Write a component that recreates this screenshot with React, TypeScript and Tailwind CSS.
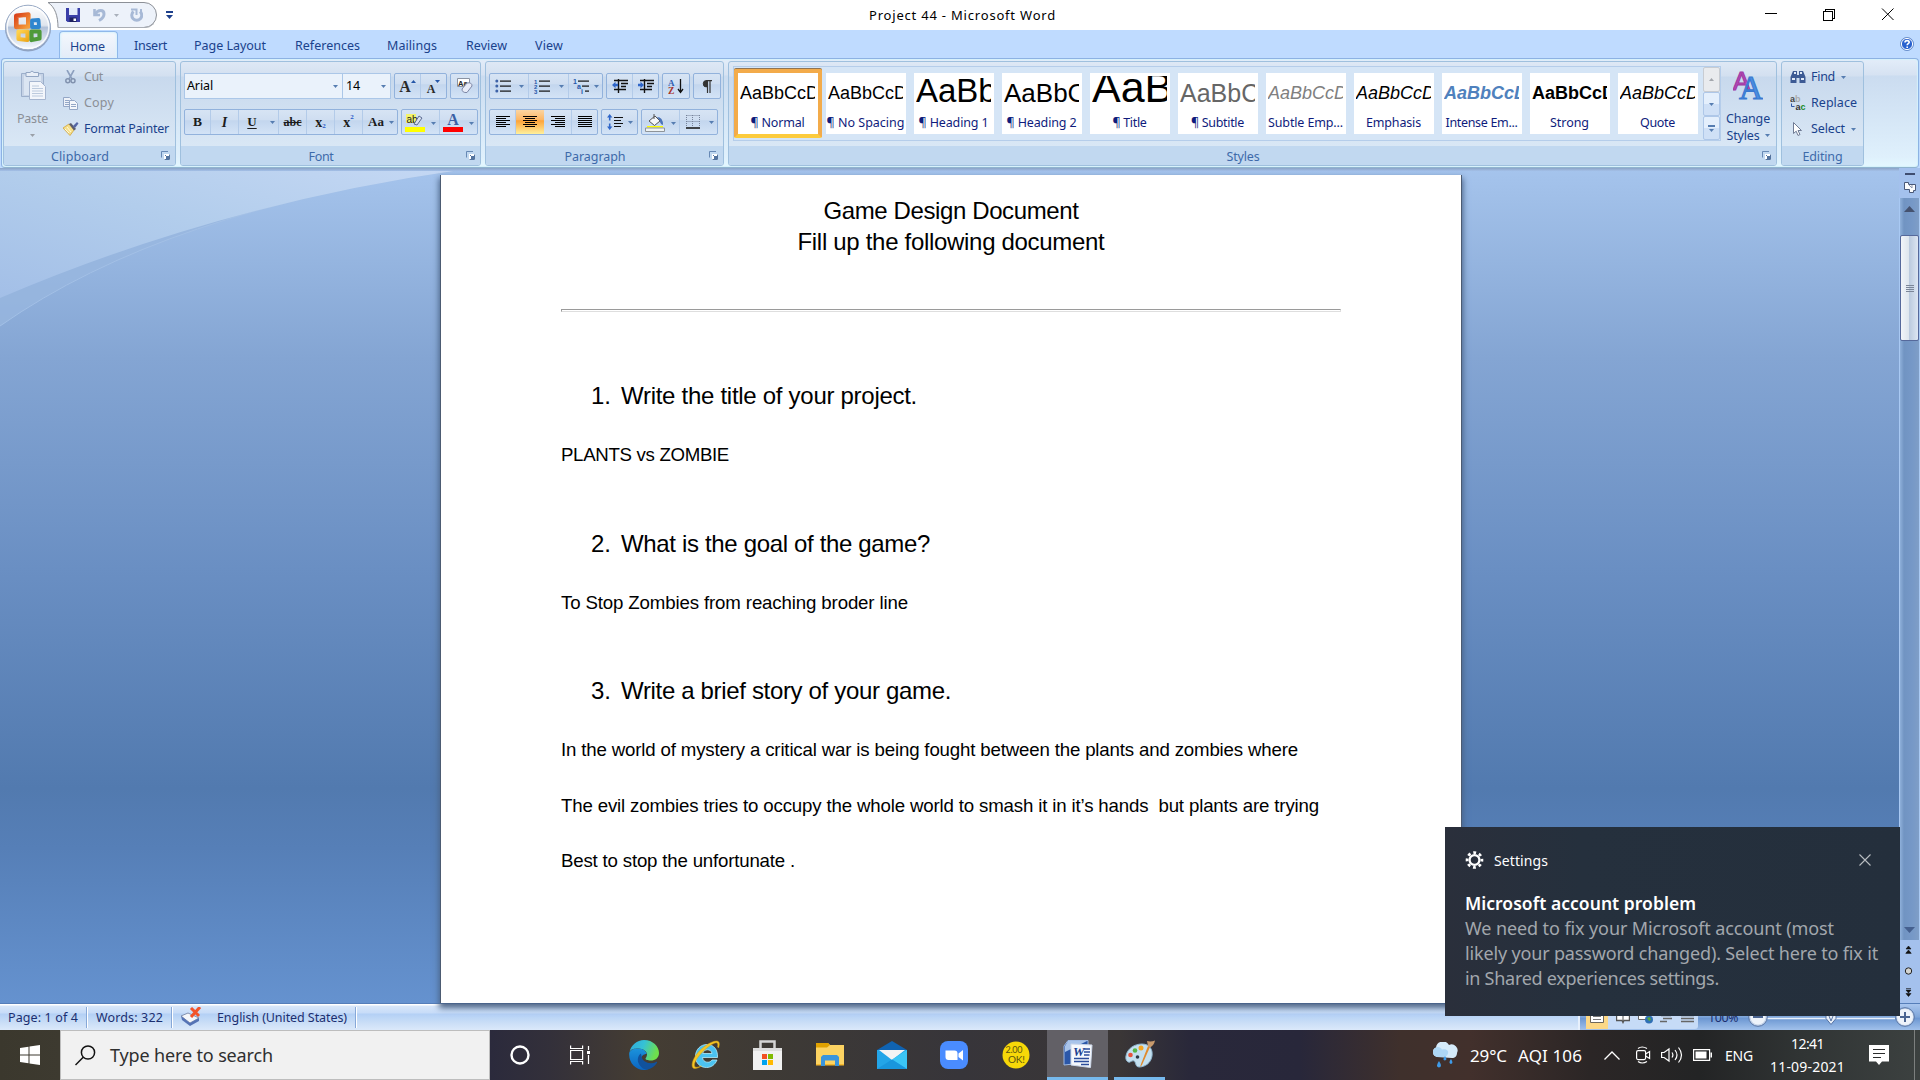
import React, { ReactNode, useLayoutEffect, useRef, useState } from "react";

/* Text set to an exact measured width by adjusting its letter spacing. */
function Fit({ w, className = "", children }: { w: number; className?: string; children: string }) {
  const ref = useRef<HTMLSpanElement>(null);
  const [ls, setLs] = useState(0);
  useLayoutEffect(() => {
    const el = ref.current;
    if (!el) return;
    const natural = el.getBoundingClientRect().width;
    setLs((w - natural) / children.length);
  }, [w, children]);
  return (
    <span ref={ref} className={"inline-block whitespace-pre shrink-0 " + className} style={{ letterSpacing: `${ls}px` }}>
      {children}
    </span>
  );
}

function Down({ className = "text-[#567db1]" }: { className?: string }) {
  return (
    <svg width="5" height="3" viewBox="0 0 5 3" className={"shrink-0 " + className}>
      <path d="M0 0h5L2.500 3z" fill="currentColor" />
    </svg>
  );
}

function Launcher() {
  return (
    <svg width="9" height="9" viewBox="0 0 9 9" className="shrink-0">
      <path d="M.5 6.500V.5H7" fill="none" stroke="#6789b5" />
      <path d="M3 3h6v6H3z" fill="#fff" />
      <path d="M4 4l3 3M8.500 3.500v5h-5" fill="none" stroke="#54749f" />
      <path d="M5 5h3v3H5z" fill="#54749f" />
    </svg>
  );
}

function Group({ className, label, w, launcher = true, children }: { className: string; label: string; w: number; launcher?: boolean; children: ReactNode }) {
  return (
    <section className={"flex h-[105px] shrink-0 flex-col overflow-hidden rounded-[3px] border border-[#9fc0de] bg-[linear-gradient(#dee8f5_0,#d3e0f0_14px,#c8d9ed_15px,#d9e7f5_84px)] " + className}>
      <div className="flex h-[84px] shrink-0">{children}</div>
      <div className="flex flex-1 items-center bg-[#c1d8f0]">
        <div className="flex flex-1 justify-center pt-[2px] leading-[18px] text-[#3e6aaa]">
          <Fit w={w}>{label}</Fit>
        </div>
        {launcher && <div className="flex w-[19px] pb-[2px] pl-[5px]"><Launcher /></div>}
      </div>
    </section>
  );
}

function Btns({ className, children }: { className: string; children: ReactNode }) {
  return (
    <div className={"flex h-[26px] shrink-0 rounded-[2px] border border-[#92b2dc] bg-[linear-gradient(#d7e4f4_0,#cfdef1_40%,#c3d6ee_45%,#d3e3f6_100%)] " + className}>
      {children}
    </div>
  );
}
function Cell({ className, children }: { className: string; children?: ReactNode }) {
  return <div className={"flex h-full shrink-0 items-center justify-center " + className}>{children}</div>;
}

const bar = "border-r border-[#b3cbe9]";

function Lines({ rows }: { rows: [number, number][] }) {
  return (
    <svg width="14" height="13" viewBox="0 0 14 13" shapeRendering="crispEdges">
      {rows.map(([x, w], i) => <rect key={i} x={x} y={i * 2} width={w} height="1" fill="#000" />)}
    </svg>
  );
}

function OfficeOrb() {
  return (
    <svg width="48" height="48" viewBox="0 0 48 48" className="absolute left-[4px] top-[4px]">
      <defs>
        <linearGradient id="orb" x1="0" y1="0" x2="0" y2="1">
          <stop offset="0" stopColor="#fff" /><stop offset=".45" stopColor="#dfe5ee" />
          <stop offset=".5" stopColor="#b3c2d9" /><stop offset="1" stopColor="#f8fbff" />
        </linearGradient>
        <linearGradient id="or" x1="0" y1="0" x2="1" y2="1"><stop offset="0" stopColor="#d9421c" /><stop offset="1" stopColor="#f7a03a" /></linearGradient>
        <linearGradient id="ye" x1="0" y1="0" x2="1" y2="1"><stop offset="0" stopColor="#ffd24d" /><stop offset="1" stopColor="#eda81c" /></linearGradient>
      </defs>
      <circle cx="24" cy="24.500" r="23" fill="#8ea2c2" />
      <circle cx="24" cy="23.500" r="22.300" fill="url(#orb)" stroke="#9aabc6" />
      <circle cx="24" cy="23.500" r="20.800" fill="none" stroke="#fff" strokeWidth="1.500" opacity=".8" />
      <path d="M12.300 11.800l12-1.300v12l-12 .5z" fill="none" stroke="url(#or)" strokeWidth="4.600" strokeLinejoin="round" />
      <path d="M28 16.500l6.500-.5 .5 7h-7z" fill="none" stroke="#2e86cf" strokeWidth="3.800" strokeLinejoin="round" />
      <path d="M14.500 27.500h9v8.500l-9-1z" fill="none" stroke="url(#ye)" strokeWidth="4.200" strokeLinejoin="round" />
      <path d="M27.500 27.500h8v7l-8 1.500z" fill="none" stroke="#4e9a3a" strokeWidth="4.200" strokeLinejoin="round" />
    </svg>
  );
}

function TitleBar() {
  return (
    <header className="relative flex h-[30px] items-center bg-white">
      <svg width="130" height="28" viewBox="0 0 130 28" className="absolute left-[44px] top-[1px]">
        <path d="M4 1.500h96a12.500 12.500 0 0 1 0 25H14C14 15 11 6 4 1.500z" fill="#edf2fa" stroke="#8c9097" />
        <path d="M14 26.500h86a12.500 12.500 0 0 0 10-4" fill="none" stroke="#a9adb4" />
      </svg>
      <div className="relative flex h-full items-center pl-[66px]">
        <svg width="14" height="14" viewBox="0 0 14 14">
          <path d="M0 0h14v14H1.500L0 12.500z" fill="#3a3fa8" />
          <path d="M3 0h8.500v7H3z" fill="#e4ecfb" /><path d="M3.500 9.500h7V14h-7z" fill="#1d2160" /><path d="M7.500 10.500H10V13H7.500z" fill="#fff" />
        </svg>
        <svg width="13" height="14" viewBox="0 0 13 14" className="ml-[13px]">
          <path d="M1.500 1v6h5.500" fill="none" stroke="#a7b9d6" strokeWidth="2.600" />
          <path d="M2 6.500C5 1 11 1.500 11 6c0 3-2 5-5 6.500" fill="none" stroke="#a7b9d6" strokeWidth="3" />
        </svg>
        <Down className="ml-[8px] text-[#a9b0bb]" />
        <svg width="13" height="14" viewBox="0 0 13 14" className="ml-[11px]">
          <path d="M3.500 3.500A5 5 0 1 0 10 3.500" fill="none" stroke="#a7b9d6" strokeWidth="3" />
          <path d="M1 1.500h5.500V7M11 1v4" fill="none" stroke="#a7b9d6" strokeWidth="2" />
        </svg>
        <svg width="7" height="9" viewBox="0 0 7 9" className="ml-[23px]">
          <path d="M0 0h7v2H0zM0 4h7L3.500 8z" fill="#1d3f8b" />
        </svg>
      </div>
      <div className="absolute left-[869px] top-[5px] leading-[20px] text-black"><Fit w={187} className="text-[13px]">Project 44 - Microsoft Word</Fit></div>
      <svg width="130" height="14" viewBox="0 0 130 14" className="ml-auto mr-[25px] shrink-0" fill="none" stroke="#000">
        <path d="M0 5.500h12" shapeRendering="crispEdges" />
        <path d="M58.500 3.500h9v9h-9zM60.500 3.500v-2h9v9h-2" shapeRendering="crispEdges" />
        <path d="M117 .5l11.500 11.500M128.500 .5l-11.500 11.500" />
      </svg>
    </header>
  );
}

function Tabs() {
  const tabs: [string, number, string][] = [
    ["Insert", 33, "ml-[17px]"], ["Page Layout", 72, "ml-[27px]"], ["References", 65, "ml-[29px]"],
    ["Mailings", 50, "ml-[27px]"], ["Review", 41, "ml-[29px]"], ["View", 28, "ml-[28px]"],
  ];
  return (
    <nav className="flex h-[28px] items-center bg-[#bfdbff] pl-[59px] text-[#1a428c]">
      <div className="mt-[1px] flex h-[28px] w-[59px] items-center justify-center self-start rounded-t-[4px] border border-b-0 border-[#8fb8ea] bg-[linear-gradient(#f4f8fd,#e2ebf8)] pt-[3px] pr-[2px] shadow-[inset_0_0_2px_1px_#d8f2fd]">
        <Fit w={35}>Home</Fit>
      </div>
      {tabs.map(([t, w, m], i) => <Fit key={t} w={w} className={"pt-[4px] " + (i === 0 ? "ml-[16px]" : m)}>{t}</Fit>)}
      <svg width="14" height="14" viewBox="0 0 14 14" className="ml-auto mr-[6px]">
        <circle cx="7" cy="7" r="6.500" fill="#2a62cf" stroke="#6f93cc" /><circle cx="7" cy="7" r="5.600" fill="none" stroke="#fff" />
        <path d="M5 5.400C5 3 9.200 3 9.200 5.300 9.200 6.700 7.200 6.700 7.200 8.200M7.200 9.400V11" fill="none" stroke="#fff" strokeWidth="1.600" />
      </svg>
    </nav>
  );
}

function Clipboard() {
  return (
    <Group className="w-[173px]" label="Clipboard" w={58}>
      <div className="flex w-[56px] shrink-0 flex-col items-center pl-[1px] pt-[8px] text-[#8b8f96]">
        <svg width="26" height="30" viewBox="0 0 26 30">
          <path d="M1.500 3.500h22v23h-22z" fill="#c6d3e6" stroke="#9cafcb" />
          <path d="M4 5.500h17V25H4z" fill="#dbe5f2" />
          <path d="M6 2.500h4q2-3 4 0h4.500v4H6z" fill="#e8eef7" stroke="#93a6c3" />
          <path d="M9.500 11.500h11l5 5v13h-16z" fill="#f3f6fb" stroke="#a6b6d0" />
          <path d="M12 16h7M12 18.500h11M12 21h11M12 23.500h11M12 26h11" stroke="#bccadd" />
        </svg>
        <Fit w={31} className="mt-[10px] leading-[18px]">Paste</Fit>
        <Down className="mt-[6px] text-[#9aa0a8]" />
      </div>
      <div className="flex flex-col pl-[3px] pt-[2px]">
        <div className="flex h-[26px] items-center text-[#8b8f96]">
          <svg width="16" height="14" viewBox="0 0 16 14" className="mr-[5px]">
            <path d="M4 0l5 9M11 0L6 9" stroke="#8da0bf" strokeWidth="1.600" /><circle cx="4.800" cy="10.800" r="2" fill="none" stroke="#8192ae" strokeWidth="1.500" /><circle cx="10" cy="10.800" r="2" fill="none" stroke="#8192ae" strokeWidth="1.500" />
          </svg>
          <Fit w={19}>Cut</Fit>
        </div>
        <div className="flex h-[26px] items-center text-[#8b8f96]">
          <svg width="16" height="14" viewBox="0 0 16 14" className="mr-[5px]" stroke="#94a7c6">
            <path d="M.5 1.500h6l2 2v7h-8z" fill="#eef2f9" /><path d="M2 4.500h4M2 6.500h4M2 8.500h4" />
            <path d="M6.500 4.500h5l3 3v6h-8z" fill="#f5f7fb" /><path d="M8 8.500h5M8 10.500h5" />
          </svg>
          <Fit w={30}>Copy</Fit>
        </div>
        <div className="flex h-[26px] items-center text-[#1a428c]">
          <svg width="16" height="14" viewBox="0 0 16 14" className="mr-[5px]">
            <path d="M0 6l6-4 5 6-4 5.500z" fill="#f6df8a" stroke="#d0a53c" strokeWidth=".8" /><path d="M6 2l2-1 5 6-2 1.500z" fill="#5b5c6e" />
            <path d="M10 4l4-4 1.500 1.500L12 6z" fill="#5566a5" /><path d="M2 7l4 4M4 5l4 5" stroke="#fff8dc" />
          </svg>
          <Fit w={85}>Format Painter</Fit>
        </div>
      </div>
    </Group>
  );
}

const serif = "font-['Liberation_Serif']";

function FontGroup() {
  return (
    <Group className="w-[301px]" label="Font" w={25}>
      <div className="flex flex-col gap-[10px] pl-[3px] pt-[11px]">
        <div className="flex">
          <div className="flex h-[26px] w-[159px] items-center border border-[#abc7e8] bg-[#eaf2fb] pl-[2px] pr-[4px] text-black">
            <Fit w={26}>Arial</Fit><Down className="ml-auto text-[#567db1]" />
          </div>
          <div className="flex h-[26px] w-[48px] items-center border border-l-0 border-[#abc7e8] bg-[#eaf2fb] pl-[3px] pr-[4px] text-black">
            <Fit w={14}>14</Fit><Down className="ml-auto text-[#567db1]" />
          </div>
          <Btns className="ml-[3px] w-[53px]">
            <Cell className={"w-[26px] " + bar}><span className={"pt-[2px] text-[16px] font-bold leading-none text-[#2b2b2b] " + serif}>A</span><svg width="5" height="3" className="mb-[10px]"><path d="M0 3h5L2.500 0z" fill="#2556a8" /></svg></Cell>
            <Cell className="w-[25px]"><span className={"pt-[5px] text-[12px] font-bold leading-none text-[#2b2b2b] " + serif}>A</span><Down className="mb-[9px] text-[#2556a8]" /></Cell>
          </Btns>
          <Btns className="ml-[3px] w-[29px]">
            <Cell className="w-full">
              <svg width="17" height="16" viewBox="0 0 17 16"><path d="M1.500.5h12v8h-12z" fill="#fff" stroke="#8a93a3" /><text x="2" y="7.500" fontSize="7.500" fontWeight="700" fontFamily="Liberation Sans" fill="#222">Aa</text><path d="M6 11l5-6q5-1 5 3l-5 6.500q-5 .5-5-3.500z" fill="#e8ecf8" stroke="#7d86a5" /></svg>
            </Cell>
          </Btns>
        </div>
        <div className="flex">
          <Btns className={"w-[214px] text-[#1c1c1c] " + serif}>
            <Cell className={"w-[26px] text-[13.500px] font-bold " + bar}>B</Cell>
            <Cell className={"w-[28px] text-[14px] font-bold italic " + bar}>I</Cell>
            <Cell className={"w-[40px] gap-[13px] pl-[5px] " + bar}><span className="text-[13px] font-bold underline underline-offset-2">U</span><Down /></Cell>
            <Cell className={"w-[28px] text-[12px] font-bold line-through " + bar}>abc</Cell>
            <Cell className={"w-[28px] " + bar}><span className="text-[14px] font-bold">x</span><span className="pt-[9px] text-[7px] font-bold text-[#2556c8]">2</span></Cell>
            <Cell className={"w-[28px] " + bar}><span className="text-[14px] font-bold">x</span><span className="pb-[9px] text-[7px] font-bold text-[#2556c8]">2</span></Cell>
            <Cell className="w-[34px] gap-[5px] pl-[2px]"><span className="text-[13px] font-bold">Aa</span><Down /></Cell>
          </Btns>
          <Btns className="ml-[3px] w-[77px]">
            <Cell className={"w-[38px] gap-[6px] pt-[2px] " + bar}>
              <svg width="20" height="18" viewBox="0 0 20 18"><path d="M1 0h10v9H1z" fill="#f3f36b" /><text x="1.500" y="8.500" fontSize="10" fontFamily="Liberation Sans" fill="#222">ab</text><path d="M9 10l5-8 3 2-5 7z" fill="#d8e0ef" stroke="#5b6c92" /><path d="M0 13h20v5H0z" fill="#ff0" /></svg><Down />
            </Cell>
            <Cell className="w-[37px] gap-[6px] pt-[2px]">
              <span className="flex h-[18px] w-[20px] flex-col items-center border-b-[5px] border-[#f00]"><span className={"-mt-[2px] text-[16px] font-bold leading-[16px] text-[#3b5fa5] " + serif}>A</span></span><Down />
            </Cell>
          </Btns>
        </div>
      </div>
    </Group>
  );
}

function Bullets({ kind }: { kind: "dot" | "num" | "tree" }) {
  const xs = kind === "tree" ? [5, 9, 12] : [5, 5, 5];
  return (
    <svg width="16" height="15" viewBox="0 0 16 15">
      {[0, 1, 2].map((i) => (
        <g key={i}>
          {kind === "dot" && <circle cx="1.800" cy={2 + i * 5} r="1.500" fill="#3d62a8" />}
          {kind === "num" && <text x="0" y={4.500 + i * 5} fontSize="6" fontWeight="700" fontFamily="Liberation Sans" fill="#2556a8">{i + 1}</text>}
          {kind === "tree" && <text x={i * 4} y={4.500 + i * 5} fontSize="7" fontWeight="700" fontFamily="Liberation Sans" fill="#2556a8">{["1", "a", "i"][i]}</text>}
          <rect x={xs[i]} y={1.500 + i * 5} width={16 - xs[i]} height="1.200" fill="#111" />
        </g>
      ))}
    </svg>
  );
}

function Indent({ right = false }: { right?: boolean }) {
  return (
    <svg width="16" height="14" viewBox="0 0 16 14">
      <path d="M2 1.500h14M9 4.500h7M9 7.500h5M2 10.500h12M6.500 0v14" stroke="#111" strokeWidth="1.400" />
      <path d={right ? "M6 6L2.500 2.800v2H0v2.400h2.500v2z" : "M0 6l3.500-3.200v2H6v2.400H3.500v2z"} fill="#2f66c9" />
    </svg>
  );
}

function Paragraph() {
  return (
    <Group className="w-[239px]" label="Paragraph" w={61}>
      <div className="flex flex-col gap-[10px] pl-[3px] pt-[11px]">
        <div className="flex gap-[3px]">
          <Btns className="w-[114px]">
            <Cell className={"w-[39px] gap-[8px] " + bar}><Bullets kind="dot" /><Down /></Cell>
            <Cell className={"w-[40px] gap-[9px] " + bar}><Bullets kind="num" /><Down /></Cell>
            <Cell className="w-[33px] gap-[5px]"><Bullets kind="tree" /><Down /></Cell>
          </Btns>
          <Btns className="w-[53px]"><Cell className={"w-[26px] " + bar}><Indent /></Cell><Cell className="w-[25px]"><Indent right /></Cell></Btns>
          <Btns className="w-[28px]"><Cell className="w-full">
            <svg width="16" height="16" viewBox="0 0 16 16"><text x="0" y="7.500" fontSize="9" fontWeight="700" fontFamily="Liberation Serif" fill="#2f5fb3">A</text><text x="0" y="16" fontSize="9.500" fontWeight="700" fontFamily="Liberation Serif" fill="#a8332a">Z</text><path d="M12.500 1v12M10 11l2.500 3.500L15 11" fill="none" stroke="#111" strokeWidth="1.300" /></svg>
          </Cell></Btns>
          <Btns className="w-[28px]"><Cell className="w-full">
            <svg width="10" height="13" viewBox="0 0 10 13"><path d="M4.500 7A3.200 3.200 0 0 1 4.500.5z" fill="#333" stroke="#333" /><path d="M5.500 0v13M8 0v13M4 .6h6" stroke="#333" strokeWidth="1.200" /></svg>
          </Cell></Btns>
        </div>
        <div className="flex gap-[3px]">
          <Btns className="w-[109px]">
            <Cell className={"w-[26px] " + bar}><Lines rows={[[0, 14], [0, 10], [0, 14], [0, 10], [0, 14], [0, 10]]} /></Cell>
            <Cell className="w-[28px] bg-[linear-gradient(#fbd5a2_0,#fdb765_40%,#fca43a_45%,#fff09c_100%)]"><Lines rows={[[0, 14], [2, 10], [0, 14], [2, 10], [0, 14], [2, 10]]} /></Cell>
            <Cell className={"w-[28px] " + bar}><Lines rows={[[0, 14], [4, 10], [0, 14], [4, 10], [0, 14], [4, 10]]} /></Cell>
            <Cell className="w-[25px]"><Lines rows={[[0, 14], [0, 14], [0, 14], [0, 14], [0, 14], [0, 14]]} /></Cell>
          </Btns>
          <Btns className="w-[37px]"><Cell className="w-full gap-[5px]">
            <svg width="16" height="16" viewBox="0 0 16 16"><path d="M2.700 0L5.400 3.500H3.500V6.500H1.900V3.500H0zM2.700 16L5.400 12.500H3.500V9.500H1.900V12.500H0z" fill="#2f66c9" /><path d="M7 3.500h9M7 6.500h7M7 9.500h9M7 12.500h7" stroke="#111" strokeWidth="1.200" /></svg><Down />
          </Cell></Btns>
          <Btns className="w-[77px]">
            <Cell className={"w-[38px] gap-[6px] pt-[2px] " + bar}>
              <svg width="20" height="18" viewBox="0 0 20 18"><path d="M4 7l6-5 5 5-5.500 4.500z" fill="#f4f6fa" stroke="#555" /><path d="M9 5V0" stroke="#555" /><path d="M12 3q6 0 6 8-3-1-3-4z" fill="#4a73b8" /><path d="M2 12h16v1.500H2z" fill="#ff0" /><path d="M.5 14h19v3.500H.5z" fill="#eef3f4" stroke="#8e9499" /></svg><Down />
            </Cell>
            <Cell className="w-[37px] gap-[9px] pl-[2px]">
              <svg width="14" height="14" viewBox="0 0 14 14"><path d="M.5.5h13M.5 6.500h13M.5 0v12M6.500 0v12M13.500 0v12" stroke="#76839a" strokeDasharray="1 1" /><path d="M0 13h14" stroke="#111" strokeWidth="1.400" /></svg><Down />
            </Cell>
          </Btns>
        </div>
      </div>
    </Group>
  );
}

const styles: [string, string, string, number][] = [
  ["AaBbCcDd", "text-[18px] leading-[34px] text-black", "¶ Normal", 54],
  ["AaBbCcDd", "text-[18px] leading-[34px] text-black", "¶ No Spacing", 78],
  ["AaBbCc", "text-[33px] leading-[29px] text-black", "¶ Heading 1", 70],
  ["AaBbCc", "text-[26px] leading-[35px] text-black", "¶ Heading 2", 70],
  ["AaBb", "text-[43px] leading-[22px] text-black", "¶ Title", 34],
  ["AaBbCc", "text-[25px] leading-[35px] text-[#666]", "¶ Subtitle", 53],
  ["AaBbCcDd", "text-[18px] leading-[34px] italic text-[#808080]", "Subtle Emp...", 75],
  ["AaBbCcDd", "text-[18px] leading-[34px] italic text-black", "Emphasis", 55],
  ["AaBbCcDd", "text-[18px] leading-[34px] font-bold italic text-[#4f81bd]", "Intense Em...", 72],
  ["AaBbCcDd", "text-[18px] leading-[34px] font-bold text-black", "Strong", 39],
  ["AaBbCcDd", "text-[18px] leading-[34px] italic text-black", "Quote", 35],
];

function Styles() {
  return (
    <Group className="w-[1049px]" label="Styles" w={33}>
      <div className="ml-[4px] mt-[4px] flex h-[75px] w-[988px] shrink-0 border border-[#b5cdea] bg-[#d5e5f6]">
        <div className="flex w-[969px] shrink-0">
          {styles.map(([sample, cls, name, w], i) => (
            <div key={name} className={"mt-[2px] flex h-[69px] w-[88px] shrink-0 flex-col border-4 " + (i === 0 ? "rounded-[2px] border-[#f3ab4a] border-b-[#fccb3c] bg-white shadow-[inset_0_0_0_1px_#fde3a6,0_-1px_0_#8f7454]" : "border-transparent")}>
              <div className="flex flex-1 flex-col bg-white pt-[3px]">
                <div className="ml-[2px] h-[32px] w-[75px] overflow-hidden">
                  <div className={"whitespace-nowrap font-['Liberation_Sans'] " + cls}>{sample}</div>
                </div>
                <div className="-ml-[1px] mt-[6px] flex justify-center leading-[18px] text-[#0f1c7c]"><Fit w={w}>{name}</Fit></div>
              </div>
            </div>
          ))}
        </div>
        <div className="flex w-[17px] shrink-0 flex-col">
          <div className="flex h-[25px] items-center justify-center rounded-[2px] border border-[#c8ccd2] bg-[#e9ebee]"><Down className="rotate-180 text-[#a3a7ad]" /></div>
          <div className="flex h-[24px] items-center justify-center rounded-[2px] border border-[#aec7e8] bg-[linear-gradient(#e4effc_50%,#cfe0f6_50%)]"><Down /></div>
          <div className="flex h-[24px] flex-col items-center justify-center gap-[2px] rounded-[2px] border border-[#aec7e8] bg-[linear-gradient(#e4effc_50%,#cfe0f6_50%)]"><span className="h-[2px] w-[7px] bg-[#567db1]" /><Down /></div>
        </div>
      </div>
      <div className="ml-[1px] flex w-[52px] flex-col items-center pt-[9px] text-[#1a428c]">
        <svg width="30" height="29" viewBox="0 0 30 29">
          <text x="0" y="19" fontSize="26" fontWeight="400" fontFamily="Liberation Sans" fill="#b64bb8" stroke="#a03aa4" strokeWidth="1.200" textLength="17" lengthAdjust="spacingAndGlyphs">A</text>
          <text x="6" y="27.500" fontSize="33" fontWeight="400" fontFamily="Liberation Serif" fill="#4a8ee0" stroke="#3a78d0" strokeWidth="1.100">A</text>
        </svg>
        <Fit w={44} className="mt-[10px] leading-[17px]">Change</Fit>
        <div className="flex items-center gap-[5px] leading-[17px]"><Fit w={33}>Styles</Fit><Down /></div>
      </div>
    </Group>
  );
}

function Editing() {
  return (
    <Group className="w-[83px]" label="Editing" w={40} launcher={false}>
      <div className="flex flex-col pl-[8px] pt-[2px] text-[#1a428c]">
        <div className="flex h-[26px] items-center">
          <svg width="16" height="14" viewBox="0 0 16 14" className="mr-[5px]"><path d="M3 1h4v4h2V1h4l2.500 6v6H9.500V8h-3v5H.5V7z" fill="#3c5a94" /><path d="M2 9h3M11 9h3M4 3h2M10 3h2" stroke="#dfe9f7" strokeWidth="2" /></svg>
          <Fit w={24}>Find</Fit><Down className="ml-[6px] text-[#567db1]" />
        </div>
        <div className="flex h-[26px] items-center">
          <svg width="16" height="16" viewBox="0 0 16 16" className="mr-[5px]"><g fontFamily="Liberation Sans" fontSize="9" fontWeight="700"><text x="0" y="7" fill="#444">a</text><text x="5" y="7" fill="#aaa">b</text><text x="5.500" y="14.500" fill="#333">a</text><text x="10.500" y="14.500" fill="#1a8a2a">c</text></g><path d="M1.500 8.500v3h3" fill="none" stroke="#2d56a5" /></svg>
          <Fit w={46}>Replace</Fit>
        </div>
        <div className="flex h-[26px] items-center">
          <svg width="16" height="14" viewBox="0 0 16 14" className="mr-[5px]"><path d="M3.500.5v11l2.700-2.300L8 13.500l2-1-2-4h3.500z" fill="#fff" stroke="#6f7b94" /></svg>
          <Fit w={34}>Select</Fit><Down className="ml-[6px] text-[#567db1]" />
        </div>
      </div>
    </Group>
  );
}

function Ribbon() {
  return (
    <div className="h-[110px] bg-[#bfdbff] pl-px pr-px">
      <div className="flex h-[110px] gap-[4px] rounded-[4px] border border-[#8db2e3] border-b-[#90b4cf] bg-[linear-gradient(#e3edf9_0,#d6e2f2_16px,#cbdcf0_17px,#dff0fc_98px,#e4f8ff)] pl-[1px] pt-[2px] shadow-[inset_0_0_1px_1px_#d5f1fb]">
        <Clipboard /><FontGroup /><Paragraph /><Styles /><Editing />
      </div>
    </div>
  );
}

type Line = { t: string; w: number; n?: string; m: string };
const lines: Line[] = [
  { n: "1.", t: "Write the title of your project.", w: 296, m: "mt-[68px]" },
  { t: "PLANTS vs ZOMBIE", w: 168, m: "mt-[28px]" },
  { n: "2.", t: "What is the goal of the game?", w: 309, m: "mt-[58px]" },
  { t: "To Stop Zombies from reaching broder line", w: 347, m: "mt-[28px]" },
  { n: "3.", t: "Write a brief story of your game.", w: 330, m: "mt-[57px]" },
  { t: "In the world of mystery a critical war is being fought between the plants and zombies where", w: 737, m: "mt-[28px]" },
  { t: "The evil zombies tries to occupy the whole world to smash it in it’s hands  but plants are trying", w: 758, m: "mt-[25px]" },
  { t: "Best to stop the unfortunate .", w: 234, m: "mt-[24px]" },
];

function Doc() {
  return (
    <main className="relative flex h-[835px] bg-[linear-gradient(#a5c4ed_0,#a0bfe8_30px,#84a5d3_190px,#6a8fc3_400px,#527aaf_620px,#567fb7_680px,#6592cf_835px)]">
      <svg width="460" height="170" viewBox="0 0 460 170" className="absolute left-0 top-0">
        <defs><linearGradient id="sw" x1="0" y1="1" x2="1" y2="0"><stop offset="0" stopColor="#a3bfe7" /><stop offset=".5" stopColor="#b2cdec" /><stop offset="1" stopColor="#c5d8f4" /></linearGradient></defs>
        <path d="M0 158Q165 42 460 2H0z" fill="#98b7df" opacity=".75" />
        <path d="M0 158Q165 42 460 2" fill="none" stroke="#a3c0e6" />
        <path d="M0 130Q220 36 460 2V0H0z" fill="url(#sw)" />
      </svg>
      <div className="absolute inset-x-0 top-0 h-[3px] bg-[linear-gradient(#8ba3c6,#a4c0e8)]" />
      <div className="relative ml-[440px] mt-[7px] w-[1022px] shrink-0 border-l border-r border-[#4c5b72] bg-white text-black shadow-[0_4px_6px_1px_#4a6387] font-['Liberation_Sans']">
        <div className="flex flex-col items-center pt-[20px] text-[24px] leading-[31px]">
          <Fit w={255}>Game Design Document</Fit>
          <Fit w={307}>Fill up the following document</Fit>
        </div>
        <div className="ml-[120px] mt-[52px] h-[3px] w-[780px] border border-[#dedede] border-l-[#9a9a9a] border-t-[#9a9a9a]" />
        <div className="flex flex-col pl-[120px] leading-[31px]">
          {lines.map((l) => (
            <div key={l.t} className={"flex h-[31px] " + l.m + (l.n ? " pl-[30px] text-[24px]" : " text-[18.670px]")}>
              {l.n && <span className="flex w-[30px] shrink-0"><Fit w={20}>{l.n}</Fit></span>}
              <Fit w={l.w}>{l.t}</Fit>
            </div>
          ))}
        </div>
      </div>
      <div className="relative ml-auto flex w-[21px] shrink-0 flex-col items-center bg-[#a4c1ed]">
        <div className="mt-[5px] h-[2px] w-[10px] shrink-0 bg-[#3f4d70]" />
        <svg width="12" height="12" viewBox="0 0 12 12" className="mt-[6px] shrink-0"><path d="M.5 1.500h4v2h7v6h-2v2h-4v-3h-5z" fill="#fbfcfe" stroke="#4a5878" /><path d="M4 3l4 4M8 4v3" stroke="#8b95ad" /></svg>
        <div className="mt-[5px] flex h-[742px] w-full shrink-0 flex-col items-center border-l border-r border-[#a9c9f3] bg-[linear-gradient(90deg,#8fb0da,#7194c2_4px,#7698c7_12px,#7f9ec7)]">
          <svg width="11" height="6" className="mt-[8px] shrink-0"><path d="M0 6L5.500 0 11 6z" fill="#45526f" /></svg>
          <div className="mt-[23px] flex h-[106px] w-[19px] shrink-0 flex-col items-center justify-center gap-[1px] rounded-[2px] border border-[#56699b] bg-[linear-gradient(90deg,#f2f5f9,#dfe6ee_45%,#bccbdf_50%,#dde6f2)]">
            <i className="h-px w-[8px] bg-[#7c8698]" /><i className="h-px w-[8px] bg-[#7c8698]" /><i className="h-px w-[8px] bg-[#7c8698]" /><i className="h-px w-[8px] bg-[#7c8698]" />
          </div>
          <svg width="11" height="6" className="mb-[7px] mt-auto shrink-0"><path d="M0 0L5.500 6 11 0z" fill="#45608f" /></svg>
        </div>
        <svg width="9" height="62" viewBox="0 0 9 62" className="ml-[-2px]">
          <path d="M4.500 6L7 9H2zM4.500 10L7 13H2zM1.500 13.500h6M2 48.500h5M4.500 53L2 50h5zM4.500 56.500L2 53.500h5z" fill="#111" stroke="#111" strokeWidth=".6" />
          <circle cx="4.500" cy="31" r="3.200" fill="#d4d4d0" stroke="#222" />
        </svg>
      </div>
    </main>
  );
}

function Sep({ className }: { className: string }) {
  return <span className={"h-[21px] w-[2px] shrink-0 border-l border-r border-l-[#86a8d8] border-r-white " + className} />;
}

function StatusBar() {
  return (
    <footer className="flex h-[27px] shrink-0 items-center border-t border-[#557eb9] bg-[linear-gradient(#fff_0,#fff_1px,#d7e6f9_2px,#c7dcf8_9px,#b3d0f5_10px,#cde0f7_20px,#dbe9fa_100%)] text-[#1b2f70]">
      <Fit w={70} className="ml-[8px] pt-[2px]">Page: 1 of 4</Fit><Sep className="ml-[8px]" />
      <Fit w={67} className="ml-[8px] pt-[2px]">Words: 322</Fit><Sep className="ml-[8px]" />
      <svg width="21" height="20" viewBox="0 0 21 20" className="ml-[7px]"><path d="M1 9l7-3 11 5-9 5z" fill="#f4f6fa" stroke="#8492b0" /><path d="M1 9l9 7v3L2 13zM10 16l9-5v3l-9 5z" fill="#5573b5" /><path d="M11 1l8 8M20 0L11 10" stroke="#f2532a" strokeWidth="3" /></svg>
      <Fit w={130} className="ml-[16px] pt-[2px]">English (United States)</Fit><Sep className="ml-[8px]" />
      <div className="ml-auto flex h-full w-[342px] items-center border-l-2 border-[#e7f0fc] bg-[linear-gradient(#a9c6ee_0,#7ea5da_50%,#6c97d2_55%,#a1c1eb_100%)] pl-[6px]">
        <div className="flex h-[24px] w-[112px] items-center justify-between rounded-[3px] bg-[#c6dbf7] pr-[4px]">
          <span className="flex h-full w-[22px] items-center justify-center bg-[#fcd887]"><svg width="14" height="14"><path d="M.5.500h13v12H.5z" fill="#fff" stroke="#6e675a" /><path d="M3 4.500h8M3 6.500h8M3 9.500h8" stroke="#777" /></svg></span>
          <svg width="14" height="13"><path d="M.5 1.500h5.500l1 1 1-1h5.500v8H8l-1 2-1-2H.5z" fill="#fff" stroke="#555" strokeWidth="1.400" /><path d="M7 2v9" stroke="#555" /></svg>
          <svg width="15" height="14"><path d="M.5.500h11v9H.5z" fill="#fff" stroke="#666" /><circle cx="11" cy="9.500" r="4" fill="#2f6fb5" /><path d="M9 8l3-1 1 3-2 1z" fill="#56a83c" /></svg>
          <svg width="13" height="12"><path d="M3 1.500h10M1 4.500h10M3 7.500h9M0 10.500h7" stroke="#666" strokeWidth="1.500" /></svg>
          <svg width="13" height="12"><path d="M0 1.500h13M0 4.500h13M0 7.500h13M0 10.500h13" stroke="#666" strokeWidth="1.500" /></svg>
        </div>
        <Fit w={30} className="ml-[10px] pt-[2px]">100%</Fit>
        <svg width="169" height="24" viewBox="0 0 169 24" className="ml-[9px]">
          <path d="M20 13.500h128" stroke="#e9f1fc" strokeWidth="1.500" />
          <circle cx="11" cy="12" r="9.300" fill="#c5d4ea" stroke="#5673a3" /><circle cx="11" cy="12" r="7.500" fill="#eef3fa" /><path d="M6 12h10" stroke="#4a6491" strokeWidth="2" />
          <path d="M79 5.500h10v8l-5 6-5-6z" fill="#e8eff9" stroke="#5673a3" /><path d="M82 11l2 5 2-5" stroke="#5673a3" fill="none" />
          <circle cx="158" cy="12" r="9.300" fill="#c5d4ea" stroke="#5673a3" /><circle cx="158" cy="12" r="8" fill="#eef3fa" /><path d="M153 12h10M158 7v10" stroke="#4a6491" strokeWidth="2" />
        </svg>
      </div>
    </footer>
  );
}

function TaskIcon({ className = "w-[62px]", children }: { className?: string; children: ReactNode }) {
  return <div className={"flex h-full shrink-0 items-center justify-center " + className}>{children}</div>;
}

function Taskbar() {
  return (
    <footer className="flex h-[50px] shrink-0 items-center bg-[linear-gradient(90deg,#3b382d_0,#3d3a30_60px,#2b2a3c_490px,#33303a_550px,#453d33_640px,#3e3a35_760px,#37353a_960px,#3a3636_1120px,#29283a_1190px,#28273a_1300px,#3f302c_1400px,#42302c_1470px,#2b2626_1590px,#232425_1700px,#303434_1800px,#3c4140_1920px)] text-white">
      <TaskIcon className="w-[60px]"><svg width="20" height="20" viewBox="0 0 20 20"><path d="M0 3l8.500-1.300v7.800H0zM9.500 1.500L20 0v9.500H9.500zM0 10.500h8.500v7.800L0 17zM9.500 10.500H20V20L9.500 18.500z" fill="#fff" /></svg></TaskIcon>
      <div className="flex h-[50px] w-[430px] shrink-0 items-center border border-[#bdbdbd] bg-[#f1f1f1] pl-[14px] text-[#2f2f2f]">
        <svg width="21" height="21" viewBox="0 0 21 21" fill="none" stroke="#111" strokeWidth="1.500"><circle cx="13" cy="7.500" r="6.600" /><path d="M8.200 12.300L.5 20" /></svg>
        <Fit w={163} className="ml-[14px] text-[18px]">Type here to search</Fit>
      </div>
      <TaskIcon className="w-[60px]"><svg width="20" height="20"><circle cx="10" cy="10" r="8.500" fill="none" stroke="#fff" strokeWidth="2.400" /></svg></TaskIcon>
      <TaskIcon className="w-[60px]"><svg width="20" height="20" viewBox="0 0 20 20" fill="none" stroke="#fff" strokeWidth="1.200"><path d="M.6.500v3h12v-3M.6 5.500h12v9H.6zM.6 19.500v-3h12v3M18.500 1v4M18.500 10v9" /><path d="M17 6h3v3h-3z" fill="#fff" stroke="none" /></svg></TaskIcon>
      <div className="w-[3px] shrink-0" />
      <TaskIcon>
        <svg width="30" height="30" viewBox="0 0 30 30">
          <defs><linearGradient id="e1" x1="0" x2="1" y1="0" y2=".3"><stop offset="0" stopColor="#2fa9dc" /><stop offset=".5" stopColor="#35c1d6" /><stop offset="1" stopColor="#6ee04c" /></linearGradient><linearGradient id="e2" x1="0" x2="0" y1="0" y2="1"><stop offset="0" stopColor="#1b93dc" /><stop offset="1" stopColor="#0b64c0" /></linearGradient></defs>
          <path d="M.5 12C2 5 8 0 15 0c9 0 15 6.500 15 13 0 5-4 7.500-8 7.500-4 0-5.500-1-5.500-2 0-.8 1.500-1.500 1.500-4 0-3-4-6-8.500-6S2 9 .5 12z" fill="url(#e1)" />
          <path d="M.3 12.500C2 9.500 5.500 8 9.500 8.500c4.500 0 8 3 8 5.500-4 0-7 4-4.500 8.500 1.500 3 5 5 9 4.500C19 29.500 17 30 15 30 6 30-.8 22 .3 12.500z" fill="url(#e2)" />
          <path d="M12 13.500c-3 2-4 6-2.500 9.500S14 29.500 18 29.800c4-.8 8-3.500 10-7 .4-.8-.2-1.200-.8-.8C21 25 13 22 12.500 16z" fill="#11529d" />
        </svg>
      </TaskIcon>
      <TaskIcon>
        <svg width="30" height="30" viewBox="0 0 30 30">
          <path d="M26.500 17.500H11.500c.5 5.500 7.500 6 9.500 2.500h5c-2 5-6 7.500-10.500 7.500-6.500 0-11-4.500-11-11 0-7 5-12 11.500-12 7 0 11 5.500 10.500 13zM11.700 13.500h9.300c-.5-5-8.500-5-9.300 0z" fill="#4bc2f0" stroke="#b3ecfd" strokeWidth=".8" />
          <path d="M27.500 8C29 4 28.500 1 25.500 1 20 1 10 8 5 15-.5 23 .5 29 4 28.500c2 0 4-1 6.500-2.500-4 1.500-6.500 2-7 0-.8-3 3-9 8-14C17 6.500 23 2.500 25.500 2.800c1.500.5 1.500 2.500 1 4z" fill="#f3c525" stroke="#d9a010" strokeWidth=".5" />
        </svg>
      </TaskIcon>
      <TaskIcon>
        <svg width="30" height="30" viewBox="0 0 30 30"><path d="M7.500 12V1.500h14V12" fill="none" stroke="#d5d5d5" strokeWidth="2.500" /><path d="M0 8h29v22H0z" fill="#f1f1f1" /><path d="M0 8h29v3H0z" fill="#ddd" /><path d="M9 14h5v5H9z" fill="#f25022" /><path d="M15 14h5v5h-5z" fill="#7fba00" /><path d="M9 20h5v5H9z" fill="#00a4ef" /><path d="M15 20h5v5h-5z" fill="#ffb900" /></svg>
      </TaskIcon>
      <TaskIcon>
        <svg width="28" height="24" viewBox="0 0 28 24"><path d="M0 0h12l2 2h14v20H0z" fill="#fcd362" /><path d="M0 0h12l2 2-3 2.500H0z" fill="#e0a100" /><path d="M0 21h28v1.500H0z" fill="#f5b82e" /><path d="M5 23v-9l2-2h14l2 2v9h-4v-5.500H9V23z" fill="#3a95dd" /></svg>
      </TaskIcon>
      <TaskIcon>
        <svg width="30" height="28" viewBox="0 0 30 28"><path d="M0 9L15 0l15 9z" fill="#0f63b2" /><path d="M0 9h30v19H0z" fill="#23a5e8" /><path d="M2 9h26L15 19z" fill="#f4f4f4" /><path d="M30 9v19L15 18.500z" fill="#3bc5f5" /><path d="M0 28l15-9.500L30 28z" fill="#1996dd" /></svg>
      </TaskIcon>
      <TaskIcon>
        <svg width="28" height="28" viewBox="0 0 28 28"><rect width="28" height="28" rx="8" fill="#4a8cff" /><path d="M5.500 9.500h9a3 3 0 0 1 3 3V19h-9a3 3 0 0 1-3-3zM18.500 12.500l4.500-3.500v10.500l-4.500-3.500z" fill="#fff" /></svg>
      </TaskIcon>
      <TaskIcon>
        <svg width="28" height="28" viewBox="0 0 28 28"><circle cx="14" cy="14" r="13.500" fill="#f7d808" /><text x="3.500" y="11.500" fontSize="9" fontFamily="Lato" fill="#5b5410" textLength="17">2.00</text><text x="6" y="22" fontSize="10" fontFamily="Lato" fill="#5b5410" textLength="17">OK!</text></svg>
      </TaskIcon>
      <TaskIcon className="w-[61px] border-b-[3px] border-[#76b9ed] bg-[#626066]">
        <svg width="30" height="28" viewBox="0 0 30 28"><path d="M5 .5h20v22L1 25V6z" fill="#2b57a8" stroke="#9db8e2" /><path d="M5 1h19L2 12V6z" fill="#a9c4ea" /><path d="M8 4l21 1-1.500 22.500L8 25z" fill="#f5f8fd" stroke="#cdd8ea" /><text x="10" y="16" fontSize="13" fontWeight="700" fontStyle="italic" fontFamily="Liberation Serif" fill="#203f8f">W</text><path d="M21 9h6M21 12h6M21 15h5.500M11 18.500h15M11 21.500h15M18 24.500h8" stroke="#2b4c9b" strokeWidth="1.700" /></svg>
      </TaskIcon>
      <TaskIcon className="ml-[6px] w-[51px] border-b-[3px] border-[#76b9ed]">
        <svg width="30" height="28" viewBox="0 0 30 28"><path d="M17 4c8 0 11 6 10 12-1 7-7 11-13 11-3 0-3-3-4-5s-3-1-5 0-5-2-4-6C2 9 9 4 17 4z" fill="#c4e0f0" stroke="#8fb6cf" /><circle cx="5.500" cy="15" r="2.300" fill="#e6533c" /><circle cx="10" cy="10.500" r="2.300" fill="#57b648" /><circle cx="16" cy="8" r="2.500" fill="#f5a623" /><circle cx="12.500" cy="17" r="1.800" fill="#2d3b4a" /><path d="M15 27l2-2 8-18-2-1-7 18z" fill="#e08a2c" /><path d="M22 1q4 1 8-.5-1 5-5 7l-2-1.500z" fill="#c89a6c" /></svg>
      </TaskIcon>
      <div className="ml-auto flex h-full w-[489px] shrink-0 items-center">
        <svg width="28" height="26" viewBox="0 0 28 26"><path d="M6 15a5 5 0 0 1-1-9.500A7 7 0 0 1 18 3a6 6 0 0 1 8 8c0 3-2 5-5 5z" fill="#d6ebfa" /><path d="M6 15a5 5 0 0 1-1-9.500c2-1 5 0 6 2 4-1 7 1 6 4-.5 2.500-3 3.500-5 3.500z" fill="#aed7f5" /><path d="M14 14q-3 4-.2 4.500Q17 18 14 14zM8 19q-4 5.500-.2 6.500Q12 25 8 19zM20 17q-3 4-.2 5Q23 21.500 20 17z" fill="#3f9be8" /></svg>
        <Fit w={37} className="ml-[11px] pt-[2px] text-[17px]">29°C</Fit>
        <Fit w={64} className="ml-[11px] pt-[2px] text-[17px]">AQI 106</Fit>
        <svg width="16" height="9" className="ml-[22px]" fill="none" stroke="#fff" strokeWidth="1.300"><path d="M.5 8.500L8 1l7.500 7.500" /></svg>
        <svg width="15" height="18" viewBox="0 0 15 18" className="ml-[16px]" fill="none" stroke="#fff" strokeWidth="1.200"><rect x=".6" y="4.600" width="9" height="9" rx="1.500" /><path d="M9.600 8l4-2.500v7l-4-2.500M2 2.500Q6-.5 11 2.500M2 15.500q4 3 9 0" /></svg>
        <svg width="22" height="18" viewBox="0 0 22 18" className="ml-[10px]" fill="none" stroke="#fff" strokeWidth="1.200"><path d="M.6 6.500h2.500L8 3v12l-4.900-3.500H.6zM11 6.500q1.800 2.500 0 5M14 4q4 5 0 10M17.500 1.500q6 7.500 0 15" /></svg>
        <svg width="19" height="12" viewBox="0 0 19 12" className="ml-[10px]"><path d="M.6.600h16v10.800h-16z" fill="none" stroke="#fff" strokeWidth="1.200" /><path d="M2.500 2.500h11v7h-11zM17.500 3.500H19v5h-1.500z" fill="#fff" /></svg>
        <Fit w={28} className="ml-[13px] text-[14px]">ENG</Fit>
        <div className="ml-[17px] flex w-[75px] flex-col items-center text-[14px] leading-[23px]"><Fit w={33}>12:41</Fit><Fit w={75}>11-09-2021</Fit></div>
        <svg width="20" height="20" viewBox="0 0 20 20" className="ml-[24px]"><path d="M0 0h20v16.500h-7L10 20l-3-3.500H0z" fill="#fff" /><path d="M4 4.500h12M4 8.500h12M4 12.500h8" stroke="#2b2d2d" /></svg>
        <span className="ml-[25px] h-full w-px bg-[#7c7f7e]" />
      </div>
    </footer>
  );
}

function Toast() {
  return (
    <aside className="absolute left-[1445px] top-[827px] flex h-[189px] w-[455px] flex-col bg-[linear-gradient(90deg,#2a2f3b,#25303d_30%,#242f3c)] pl-[20px] text-white">
      <div className="mt-[20px] flex h-[26px] items-center">
        <svg width="19" height="18" viewBox="0 0 20 20" fill="none" stroke="#fff"><circle cx="10" cy="10" r="5.500" strokeWidth="2.600" /><circle cx="10" cy="10" r="8.300" strokeWidth="3" strokeDasharray="3.200 3.318" strokeDashoffset="1.600" /></svg>
        <Fit w={54} className="ml-[10px] text-[14px]">Settings</Fit>
        <svg width="12" height="12" className="ml-auto mr-[29px]" stroke="#b9bdc2" strokeWidth="1.100"><path d="M.5.500l11 11M11.500.500l-11 11" /></svg>
      </div>
      <div className="mt-[18px] flex h-[25px] items-center"><Fit w={231} className="text-[17.500px] font-semibold">Microsoft account problem</Fit></div>
      <div className="flex flex-col text-[18px] leading-[25px] text-[#a2a7ad]">
        <Fit w={369} className="self-start">We need to fix your Microsoft account (most</Fit>
        <Fit w={413} className="self-start">likely your password changed). Select here to fix it</Fit>
        <Fit w={254} className="self-start">in Shared experiences settings.</Fit>
      </div>
    </aside>
  );
}

export default function App() {
  return (
    <div className="relative flex h-[1080px] w-[1920px] flex-col overflow-hidden bg-white font-['Noto_Sans','Open_Sans',sans-serif] text-[12.500px]">
      <TitleBar />
      <Tabs />
      <Ribbon />
      <Doc />
      <StatusBar />
      <Taskbar />
      <OfficeOrb />
      <Toast />
    </div>
  );
}
